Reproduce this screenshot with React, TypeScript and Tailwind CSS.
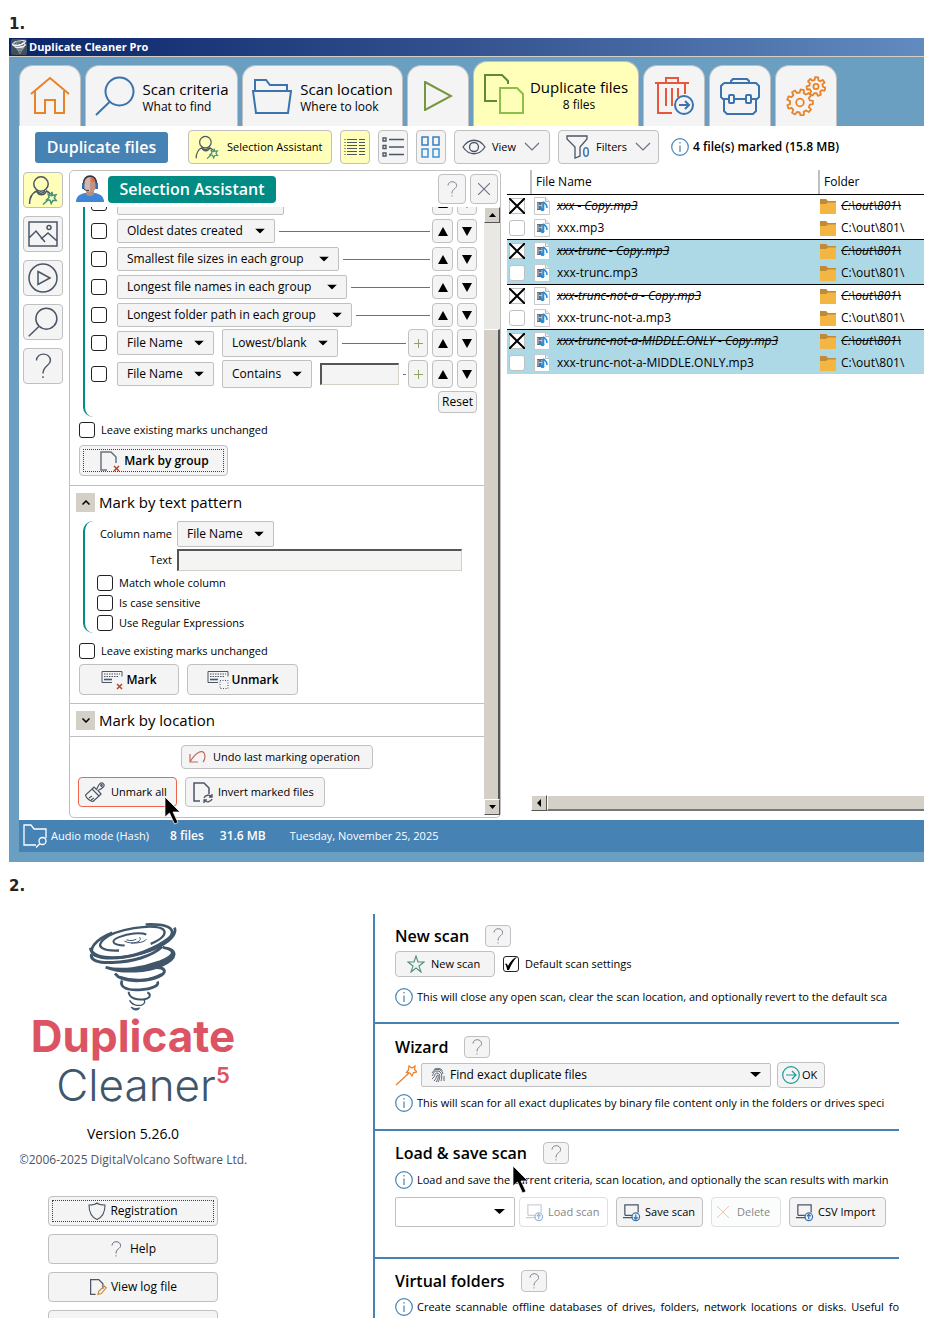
import type { ReactNode } from 'react';
import { clsx } from 'clsx';

interface IconProps {
  className?: string;
}

interface FileRow {
  name: string;
  folder: string;
  marked: boolean;
  shaded: boolean;
}

const files: FileRow[] = [
  { name: 'xxx - Copy.mp3', folder: 'C:\\out\\801\\', marked: true, shaded: false },
  { name: 'xxx.mp3', folder: 'C:\\out\\801\\', marked: false, shaded: false },
  { name: 'xxx-trunc - Copy.mp3', folder: 'C:\\out\\801\\', marked: true, shaded: true },
  { name: 'xxx-trunc.mp3', folder: 'C:\\out\\801\\', marked: false, shaded: true },
  { name: 'xxx-trunc-not-a - Copy.mp3', folder: 'C:\\out\\801\\', marked: true, shaded: false },
  { name: 'xxx-trunc-not-a.mp3', folder: 'C:\\out\\801\\', marked: false, shaded: false },
  { name: 'xxx-trunc-not-a-MIDDLE.ONLY - Copy.mp3', folder: 'C:\\out\\801\\', marked: true, shaded: true },
  { name: 'xxx-trunc-not-a-MIDDLE.ONLY.mp3', folder: 'C:\\out\\801\\', marked: false, shaded: true },
];

const groupRules = [
  { label: 'Oldest dates modified', width: 'w-[167px]' },
  { label: 'Oldest dates created', width: 'w-[158px]' },
  { label: 'Smallest file sizes in each group', width: 'w-[222px]' },
  { label: 'Longest file names in each group', width: 'w-[230px]' },
  { label: 'Longest folder path in each group', width: 'w-[235px]' },
];

/* ---------- icons ---------- */

function Svg({ className, box, children, width = 1.5 }: IconProps & { box: string; children: ReactNode; width?: number }) {
  return (
    <svg viewBox={box} className={clsx('shrink-0', className)} fill="none" stroke="currentColor" strokeWidth={width} aria-hidden="true">
      {children}
    </svg>
  );
}

// outline of a cog wheel with square teeth
function cog(cx: number, cy: number, outer: number, inner: number, teeth: number, turn = 0) {
  const step = (Math.PI * 2) / teeth;
  const points: string[] = [];
  for (let i = 0; i < teeth; i++) {
    const a = i * step + turn;
    [[-0.3, inner], [-0.19, outer], [0.19, outer], [0.3, inner]].forEach(([off, r]) => {
      const t = a + off * step;
      points.push(`${(cx + r * Math.cos(t)).toFixed(2)} ${(cy + r * Math.sin(t)).toFixed(2)}`);
    });
  }
  return `M${points.join('L')}Z`;
}

function Tornado({ className, bold = false }: IconProps & { bold?: boolean }) {
  return (
    <Svg box="0 0 264 266" className={className} width={bold ? 16 : 8}>
      <path d="M70 29C20 48-8 82 18 97c42 18 132 4 187-26C266 38 272 0 170 4" />
      <path d="M4 74c2 34 88 40 160 12 70-28 104-60 92-72 12 24-30 56-92 74C90 110 12 110 4 74z" fill="currentColor" />
      <path d="M90 82C40 84 18 70 45 48 80 18 190 0 222 18c16 16-12 34-37 44" strokeWidth={bold ? 12 : 7} />
      <path d="M107 67C70 66 62 52 90 42c28-11 64-16 82-8" strokeWidth="6" />
      <path d="M106 54c20 10 60 6 66-6M126 60c24-2 32-8 26-18M112 50c14 4 22 2 30-2" strokeWidth="3" />
      <path d="M8 93c-6 18 20 27 62 25C130 116 188 100 220 70" strokeWidth="9" />
      <path d="M222 73c40 8 36 24-8 42-54 20-118 30-164 17 50 20 126 14 170-6 46-20 48-48 2-53z" fill="currentColor" />
      <path d="M78 151c14 20 50 24 90 20 50-6 64-24 56-32-6-7-24-4-42-10" strokeWidth="9" />
      <path d="M99 172c-8 20 14 30 52 28 40-2 62-14 54-25" strokeWidth="8" />
      <path d="M92 160c40 14 90 12 124-8" strokeWidth="4" />
      <path d="M119 206c0 20 28 26 48 22 20-4 18-16 8-20" strokeWidth="6" />
      <path d="M122 231c4 12 22 18 36 15 12-4 10-14 6-18" strokeWidth="4" />
      <path d="M126 252c6 10 22 12 26 2-8 3-16 3-26-2z" fill="currentColor" strokeWidth="3" />
    </Svg>
  );
}

const Person = ({ className }: IconProps) => (
  <Svg box="0 0 30 30" className={className}>
    <circle cx="13" cy="9" r="7.2" />
    <path d="M1.500 29c0-7 3-11 7-13 2 5 8 5 10 0 2 1 3 2 4 3" />
    <path d="M9 16c2 3 6 3 8 0" />
    <path stroke="#4b9277" d="m24 17 .6 3.400 3.400-.6-1.800 3 2 2.700-3.400.1-1.600 3-1.200-3.300-3.400-.5 2.500-2.300-.9-3.200 3 1.400zM20 25l-5 4.500" />
  </Svg>
);

const Glass = ({ className }: IconProps) => (
  <Svg box="0 0 40 40" className={className} width={2}>
    <circle cx="24.500" cy="15.500" r="14" />
    <path d="M14.500 26 1 39" />
  </Svg>
);

const Page = ({ className, children }: IconProps & { children?: ReactNode }) => (
  <Svg box="0 0 22 22" className={className}>
    <path d="M8 20H2V2h10l5 5v6" />
    {children}
  </Svg>
);

const Question = ({ className }: IconProps) => (
  <Svg box="0 0 20 28" className={className}>
    <path d="M3 8c0-9 15-9 15 0 0 6-8 5-8 14M10 25v2" />
  </Svg>
);

const Info = ({ className = 'size-[18px]' }: IconProps) => (
  <Svg box="0 0 18 18" className={clsx('text-[#4682b4]', className)} width={1.2}>
    <circle cx="9" cy="9" r="8.300" />
    <path d="M9 7.500V14M9 4v1.500" />
  </Svg>
);

const Laptop = ({ up = false, className }: IconProps & { up?: boolean }) => (
  <Svg box="0 0 20 20" className={className} width={1.3}>
    <path d="M3 13V2h14v8M1 15.500h10M3 13h8" />
    <g stroke="#3a73ae">
      <circle cx="14.500" cy="14.500" r="4" />
      <path d={up ? 'M14.500 17v-5M12.500 14l2-2 2 2' : 'M14.500 12v5M12.500 15l2 2 2-2'} />
    </g>
  </Svg>
);

const Keyboard = ({ className, children }: IconProps & { children?: ReactNode }) => (
  <Svg box="0 0 22 20" className={className} width={1}>
    <path d="M11 12.500H1V1.500h20v5" />
    <path d="M3 4h16M3 6.500h15" strokeDasharray="1.500 1" />
    <path d="M3 9.500h8" strokeWidth="1.600" />
    {children}
  </Svg>
);

const Chevron = ({ className }: IconProps) => (
  <Svg box="0 0 16 10" className={className} width={1.2}>
    <path d="m1 1 7 7 7-7" />
  </Svg>
);

const Triangle = ({ className, up = false }: IconProps & { up?: boolean }) => (
  <svg viewBox="0 0 10 10" preserveAspectRatio="none" className={clsx('shrink-0 fill-black', className)} aria-hidden="true">
    <path d={up ? 'M5 0l5 10H0z' : 'M5 10L0 0h10z'} />
  </svg>
);

const Pointer = ({ className }: IconProps) => (
  <svg viewBox="0 0 17 29" className={clsx('pointer-events-none absolute z-10 h-[29px] w-[17px]', className)} aria-hidden="true">
    <path d="M1 1v20l4.500-4 5 11 3.500-1.500-5-10.500h7z" fill="#000" stroke="#fff" strokeWidth=".7" />
  </svg>
);

const Mp3 = () => (
  <svg viewBox="0 0 16 18" className="h-[18px] w-4 shrink-0" aria-hidden="true">
    <path d="M.5.500h11l4 4v13H.5z" fill="#fff" stroke="#c9c9c9" />
    <path d="M11.500.500v4h4" fill="#eee" stroke="#bbb" />
    <path d="M3 5h6v8H3z" fill="#5b6f86" />
    <path d="M4 6v6M8 6v6M5 8.500h3" stroke="#cfe0ee" strokeWidth=".8" />
    <path d="M9.500 4.500v7M9.500 5c1.500 2 4 2 3.500 6" fill="none" stroke="#1e90e6" strokeWidth="1.600" />
    <circle cx="8.500" cy="12.300" r="1.900" fill="#1e90e6" />
  </svg>
);

const Folder = () => (
  <svg viewBox="0 0 16 15" className="h-[15px] w-4 shrink-0" aria-hidden="true">
    <path d="M0 0h6l2 2h8v4H0z" fill="#c28a34" />
    <path d="M0 5h6l2-1.500h8V15H0z" fill="#f4b643" />
  </svg>
);

const Agent = () => (
  <svg viewBox="0 0 28 28" className="size-7 shrink-0" aria-hidden="true">
    <path d="M0 27c0-5 3-8 9-9h10c6 1 9 4 9 9z" fill="#3f86d8" />
    <path d="M10 14h8v5c-2 3-6 3-8 0z" fill="#b88e80" />
    <path d="M8 7c0-8 12-8 12 0v6c-2 5-10 5-12 0z" fill="#d8b5a8" />
    <path d="M14 1c4 0 6 2 6 6v6c-1 2-3 4-6 4z" fill="#c09585" />
    <path d="M7.500 9C7-1.500 21-1.500 20.500 9" fill="none" stroke="#34343c" strokeWidth="1.600" />
    <path d="M15 2c2 0 4 2 4 5h-3z" fill="#e8694a" />
    <path d="M6 8h2.500v6H6zM19.500 8H22v6h-2.500z" fill="#2f6fbd" />
    <path d="M7 13c1 2 3 2.500 6 2.500" fill="none" stroke="#34343c" />
  </svg>
);

/* ---------- controls ---------- */

const buttonBase = 'flex shrink-0 items-center rounded border border-[#c0c0c0] bg-[#f4f4f4] whitespace-nowrap';

function Check({ id, label, className, mark, border = 'border-[#222]' }: IconProps & { id: string; label?: string; mark?: 'tick' | 'cross'; border?: string }) {
  return (
    <span className={clsx('flex items-center gap-1.5', className)}>
      <span className="relative flex size-4 shrink-0">
        <input
          id={id}
          type="checkbox"
          defaultChecked={Boolean(mark)}
          aria-label={label ? undefined : id}
          className={clsx('size-4 appearance-none rounded-[3px] border bg-white', border)}
        />
        {mark === 'cross' && (
          <svg viewBox="0 0 16 16" className="pointer-events-none absolute inset-0 size-4" stroke="#000" strokeWidth="2" aria-hidden="true">
            <path d="m0 0 16 16M16 0 0 16" />
          </svg>
        )}
        {mark === 'tick' && (
          <svg viewBox="0 0 16 16" className="pointer-events-none absolute inset-0 size-4" aria-hidden="true">
            <path d="M2 8c1-1 2-1 3 2 2-4 5-8 9-9-3 3-6 8-8 13H4C4 12 3 9 2 8z" />
          </svg>
        )}
      </span>
      {label && <label htmlFor={id}>{label}</label>}
    </span>
  );
}

function Dropdown({ value, label, className, id }: { value: string; label: string; className: string; id?: string }) {
  return (
    <span className={clsx('relative flex shrink-0', className)}>
      <select
        id={id}
        aria-label={label}
        className="h-full w-full appearance-none rounded-[2px] border border-[#c0c0c0] bg-[#f4f4f4] pl-[9px] text-xs"
      >
        <option>{value}</option>
      </select>
      <Triangle className="pointer-events-none absolute top-1/2 right-[10px] h-[5px] w-[10px] -translate-y-1/2" />
    </span>
  );
}

function MoveButtons() {
  return (
    <>
      <button aria-label="Move up" className={clsx(buttonBase, 'h-full w-[21px] justify-center')}>
        <Triangle up className="h-[9px] w-[10px]" />
      </button>
      <button aria-label="Move down" className={clsx(buttonBase, 'ml-1 h-full w-5 justify-center')}>
        <Triangle className="h-[9px] w-[10px]" />
      </button>
    </>
  );
}

const AddButton = () => (
  <button aria-label="Add rule" className={clsx(buttonBase, 'mr-1 h-full w-5 justify-center text-[#8fa565]')}>
    <Svg box="0 0 9 9" className="size-[9px]" width={1}>
      <path d="M4.500 0v9M0 4.500h9" />
    </Svg>
  </button>
);

const HelpButton = ({ className = 'h-[22px] w-[26px]' }: IconProps) => (
  <button aria-label="Help" className={clsx(buttonBase, 'justify-center text-gray-500', className)}>
    <Question className="h-4 w-3" />
  </button>
);

function Tab({ className = 'w-[62px]', active = false, label, children }: IconProps & { active?: boolean; label: string; children: ReactNode }) {
  return (
    <button
      aria-label={label}
      className={clsx(
        'flex shrink-0 items-center justify-center gap-2 rounded-t-[14px] border border-b-0 border-[#c0c0c0]',
        active ? 'h-[65px] bg-[#ffffb9]' : 'h-[61px] bg-[#f4f4f4]',
        className,
      )}
    >
      {children}
    </button>
  );
}

function TabText({ title, sub, center = false }: { title: string; sub: string; center?: boolean }) {
  return (
    <span className={clsx('flex flex-col pt-[3px] whitespace-nowrap', center ? 'text-center' : 'text-left')}>
      <span className="text-[15px] leading-[18px]">{title}</span>
      <span className="text-xs leading-[18px]">{sub}</span>
    </span>
  );
}

/* ---------- main window ---------- */

function Tabs() {
  return (
    <nav className="flex items-end gap-1 overflow-hidden pt-1 pl-[10px]">
      <Tab label="Home">
        <Svg box="0 0 40 40" className="size-10 text-[#e8832a]" width={2}>
          <path d="M1 18 20 2l19 16M5 15v22h10V24h10v13h9V15" />
        </Svg>
      </Tab>
      <Tab label="Scan criteria" className="w-[153px]">
        <Glass className="size-10 text-[#3a73ae]" />
        <TabText title="Scan criteria" sub="What to find" />
      </Tab>
      <Tab label="Scan location" className="w-[161px]">
        <Svg box="0 0 40 38" className="h-[38px] w-10 text-[#3a73ae]" width={2}>
          <path d="M3 14V3h11l4 5h17v6M1 14h38l-3 22H4z" />
        </Svg>
        <TabText title="Scan location" sub="Where to look" />
      </Tab>
      <Tab label="Scan">
        <Svg box="0 0 30 30" className="size-[30px] text-[#76963f]" width={2}>
          <path d="m2 1 26 14L2 29z" />
        </Svg>
      </Tab>
      <Tab label="Duplicate files" active className="w-[166px] gap-1.5!">
        <Svg box="0 0 40 40" className="size-10 text-[#8dbd4d]" width={2}>
          <path d="M13 27H1V1h17l6 6v3" stroke="#5f8a34" />
          <path d="M16 14h17l6 6v19H16z" />
        </Svg>
        <TabText center title="Duplicate files" sub="8 files" />
      </Tab>
      <Tab label="File removal">
        <Svg box="0 0 40 40" className="size-10 text-[#e9563b]" width={2}>
          <path d="M1 7h34M12 7V2h12v5M4 8v29h14M31 8v10M12 12v18M18 12v18M24 12v9" />
          <g stroke="#3a73ae">
            <circle cx="30" cy="29" r="9" />
            <path d="M25 29h10M31 25l4 4-4 4" />
          </g>
        </Svg>
      </Tab>
      <Tab label="Tools">
        <Svg box="0 0 40 38" className="h-[38px] w-10 text-[#3a73ae]" width={2}>
          <path d="M11 6V4l2-2h14l2 2v2M4 6h32l3 3v11l-2 2h-6M9 22H3l-2-2V9l3-3M4 22v12l3 3h26l3-3V22M14 22h12" />
          <rect x="9" y="18" width="5" height="8" rx="1" />
          <rect x="26" y="18" width="5" height="8" rx="1" />
        </Svg>
      </Tab>
      <Tab label="Settings">
        <Svg box="0 0 40 40" className="size-10 text-[#e8832a]" width={1.8}>
          <path d={cog(14, 26.5, 13, 10, 9)} strokeLinejoin="round" />
          <circle cx="14" cy="26.500" r="3.800" />
          <path d={cog(30, 10.5, 9.500, 6.800, 7, 0.3)} strokeLinejoin="round" />
          <circle cx="30" cy="10.500" r="2.600" />
        </Svg>
      </Tab>
    </nav>
  );
}

function Toolbar() {
  const square = clsx(buttonBase, 'h-[34px] w-[30px] justify-center text-gray-600');
  return (
    <div className="flex items-center gap-2 overflow-hidden pt-1 pl-4 text-[11px] whitespace-nowrap">
      <h1 className="mr-3 flex h-[31px] w-[133px] shrink-0 items-center justify-center rounded-[3px] bg-[#4682b4] text-base font-semibold text-white">
        Duplicate files
      </h1>
      <button className={clsx(buttonBase, 'h-[34px] w-36 gap-2 bg-[#ffffb9]! pl-1.5')}>
        <Person className="size-6 text-gray-600" />
        Selection Assistant
      </button>
      <button aria-label="Details" className={clsx(square, 'bg-[#ffffb9]!')}>
        <Svg box="0 0 22 18" className="h-[18px] w-[22px]" width={1.2}>
          <path d="M3 1.500h10M3 4.500h10M3 7.500h10M3 10.500h10M3 13.500h10M3 16.500h10M15 1.500h6M15 4.500h6M15 7.500h6M15 10.500h6M15 13.500h6M15 16.500h6" />
          <path d="M1 1v16" strokeDasharray="1 2" />
        </Svg>
      </button>
      <button aria-label="List" className={square}>
        <Svg box="0 0 22 20" className="h-5 w-[22px]" width={1.3}>
          <path d="M1 1h3v3H1zM1 8.500h3v3H1zM1 16h3v3H1zM7 2.500h15M7 10h15M7 17.500h15" />
        </Svg>
      </button>
      <button aria-label="Tiles" className={square}>
        <Svg box="0 0 20 22" className="h-[22px] w-5 text-[#3a7cc0]">
          <path d="M1 1h6v8H1zM12 1h6v8h-6z" />
          <path d="M1 13h6v8H1zM12 13h6v8h-6z" stroke="#3d93d6" />
        </Svg>
      </button>
      <button className={clsx(buttonBase, 'h-[34px] w-24 gap-1.5 pl-[7px]')}>
        <Svg box="0 0 24 16" className="h-4 w-6 text-gray-600" width={1.3}>
          <path d="M1 8C7-1 17-1 23 8 17 17 7 17 1 8z" />
          <circle cx="12" cy="8" r="4.500" />
        </Svg>
        View
        <Chevron className="ml-[2px] h-2.5 w-4 text-gray-500" />
      </button>
      <button className={clsx(buttonBase, 'h-[34px] w-[101px] gap-1.5 pl-[7px]')}>
        <Svg box="0 0 24 24" className="size-6 text-gray-600" width={1.3}>
          <path d="M1 1h20v3l-7 8v9l-5 2V12L1 4z" />
          <ellipse cx="20" cy="17" rx="2.300" ry="4.200" stroke="#3a7cc0" strokeWidth="1.600" />
        </Svg>
        Filters
        <Chevron className="ml-[2px] h-2.5 w-4 text-gray-500" />
      </button>
      <p className="ml-1 flex items-center gap-1 text-xs font-semibold">
        <Info />
        4 file(s) marked (15.8 MB)
      </p>
    </div>
  );
}

function SideButtons() {
  const base = clsx(buttonBase, 'h-9 w-10 justify-center text-gray-600');
  return (
    <aside className="flex w-[50px] shrink-0 flex-col gap-2 pt-[2px] pl-1">
      <button aria-label="Selection Assistant" className={clsx(base, 'bg-[#ffffb9]!')}>
        <Person className="size-[30px]" />
      </button>
      <button aria-label="Image preview" className={base}>
        <Svg box="0 0 30 26" className="h-[26px] w-[30px]">
          <path d="M1 1h28v24H1zM1 17l7-7 9 11M13 18l7-6 9 8" />
          <circle cx="21" cy="6.500" r="2" />
        </Svg>
      </button>
      <button aria-label="Play" className={base}>
        <Svg box="0 0 30 30" className="size-[30px]">
          <circle cx="15" cy="15" r="14" />
          <path d="m10 8.500 12 6.500-12 6.500z" />
        </Svg>
      </button>
      <button aria-label="Search" className={base}>
        <Glass className="size-[30px]" />
      </button>
      <button aria-label="Help" className={base}>
        <Question className="h-[26px] w-5" />
      </button>
    </aside>
  );
}

function GroupRules() {
  return (
    <div className="mr-[7px] ml-[13px] overflow-hidden rounded-bl-[10px] border-l-2 border-[#008b84] pb-1 pl-1.5">
      <div className="-mt-4 flex flex-col gap-1">
        {groupRules.map((rule) => (
          <div key={rule.label} className="flex h-6 items-center">
            <Check id={`Use ${rule.label}`} className="mr-[10px]" />
            <Dropdown label={rule.label} value={rule.label} className={clsx('h-6', rule.width)} />
            <span className="mr-[2px] ml-1 h-px flex-1 bg-gray-500" />
            <MoveButtons />
          </div>
        ))}
      </div>
      <div className="mt-[2px] flex flex-col gap-[3px]">
        <div className="flex h-7 items-center">
          <Check id="Use file name order" className="mr-[10px]" />
          <Dropdown label="Column" value="File Name" className="mr-2 h-6 w-[97px]" />
          <Dropdown label="Order" value="Lowest/blank" className="h-7 w-[116px]" />
          <span className="mr-[2px] ml-1 h-px flex-1 bg-gray-500" />
          <AddButton />
          <MoveButtons />
        </div>
        <div className="flex h-7 items-center">
          <Check id="Use file name text" className="mr-[10px]" />
          <Dropdown label="Column" value="File Name" className="mr-2 h-6 w-[97px]" />
          <Dropdown label="Condition" value="Contains" className="mr-2 h-7 w-[90px]" />
          <input
            aria-label="Contains text"
            className="h-[22px] w-[79px] border border-t-2 border-l-2 border-[#d4d0c8] border-t-[#555] border-l-[#555] bg-[#f4f4f4]"
          />
          <span className="mr-[2px] ml-1 h-px flex-1 bg-gray-500" />
          <AddButton />
          <MoveButtons />
        </div>
        <button className={clsx(buttonBase, 'h-[22px] w-[39px] justify-center self-end text-xs')}>Reset</button>
      </div>
    </div>
  );
}

function SectionTitle({ title, open = false }: { title: string; open?: boolean }) {
  return (
    <div className="flex items-center gap-1 border-t border-[#c0c0c0] px-1.5">
      <button aria-label={title} className="flex size-[19px] items-center justify-center bg-[#d4d0c8]">
        <Svg box="0 0 8 5" className="h-[5px] w-2" width={1.5}>
          <path d={open ? 'm.5 4.500 3.500-3.500 3.500 3.500' : 'm.5.500 3.500 3.500 3.500-3.500'} />
        </Svg>
      </button>
      <h2 className="text-[15px] leading-8">{title}</h2>
    </div>
  );
}

function ScrollBar() {
  const end = 'flex size-4 shrink-0 items-center justify-center border border-t-white border-r-[#555] border-b-[#555] border-l-white bg-[#d4d0c8]';
  return (
    <div className="flex w-4 shrink-0 flex-col bg-[#e9e8e4]">
      <button aria-label="Scroll up" className={end}>
        <Triangle up className="h-1 w-[7px]" />
      </button>
      <div className="mt-[106px] flex-1 border-t border-r-2 border-t-white border-r-[#555] bg-[#d4d0c8]" />
      <button aria-label="Scroll down" className={end}>
        <Triangle className="h-1 w-[7px]" />
      </button>
    </div>
  );
}

function AssistantPanel() {
  return (
    <section className="flex w-[432px] shrink-0 flex-col rounded-[5px] border border-[#c0c0c0] pb-[2px]">
      <header className="flex h-9 items-center gap-1 pr-[2px] pl-1.5">
        <Agent />
        <h2 className="flex h-[27px] w-[168px] items-center justify-center rounded bg-[#008b84] text-base font-semibold text-white">
          Selection Assistant
        </h2>
        <HelpButton className="ml-auto h-[30px] w-7" />
        <button aria-label="Close" className={clsx(buttonBase, 'h-[30px] w-7 justify-center text-gray-500')}>
          <Svg box="0 0 12 12" className="size-3" width={1.1}>
            <path d="m0 0 12 12M12 0 0 12" />
          </Svg>
        </button>
      </header>
      <div className="flex text-[11px] leading-4">
        <div className="relative min-w-0 flex-1 pb-2">
          <GroupRules />
          <Check id="leave-group" label="Leave existing marks unchanged" className="mt-[5px] ml-[9px]" />
          <button className={clsx(buttonBase, 'mt-[7px] mb-[9px] ml-[9px] h-[31px] w-[149px] p-[3px] text-xs font-semibold')}>
            <span className="flex h-full w-full items-center justify-center gap-[2px] border border-dotted border-gray-700">
              <Page className="h-[22px] w-6 text-gray-500">
                <path d="m15 16 5 5M20 16l-5 5" stroke="#b5452f" />
              </Page>
              Mark by group
            </span>
          </button>
          <SectionTitle title="Mark by text pattern" open />
          <div className="mt-[3px] mr-[7px] ml-[13px] flex flex-col rounded-l-[10px] border-l-2 border-[#008b84]">
            <div className="flex items-center gap-[5px]">
              <label htmlFor="column" className="w-[87px] text-right">Column name</label>
              <Dropdown id="column" label="Column name" value="File Name" className="h-[26px] w-[97px]" />
            </div>
            <div className="mt-[2px] flex items-center gap-[5px]">
              <label htmlFor="pattern" className="w-[87px] text-right">Text</label>
              <input
                id="pattern"
                className="h-[22px] w-[285px] border border-t-2 border-l-2 border-[#d4d0c8] border-t-[#555] border-l-[#555] bg-[#f4f4f4]"
              />
            </div>
            <div className="mt-1 mb-[2px] flex flex-col gap-1 pl-3">
              <Check id="whole" label="Match whole column" />
              <Check id="case" label="Is case sensitive" />
              <Check id="regex" label="Use Regular Expressions" />
            </div>
          </div>
          <Check id="leave-text" label="Leave existing marks unchanged" className="mt-[10px] ml-[9px]" />
          <div className="mt-[5px] mb-2 ml-[9px] flex gap-2 text-xs font-semibold">
            <button className={clsx(buttonBase, 'h-[31px] w-[100px] justify-center gap-[3px]')}>
              <Keyboard className="h-5 w-[22px] text-gray-600">
                <path d="m16 14 5 5M21 14l-5 5" stroke="#b5452f" strokeWidth="1.500" />
              </Keyboard>
              Mark
            </button>
            <button className={clsx(buttonBase, 'h-[31px] w-[111px] justify-center gap-[3px]')}>
              <Keyboard className="h-5 w-[22px] text-gray-600">
                <path d="M13 10.500h8v8h-8z" strokeDasharray="1 1.500" />
              </Keyboard>
              Unmark
            </button>
          </div>
          <SectionTitle title="Mark by location" />
          <div className="border-t border-[#c0c0c0] pt-2 pl-2">
            <button className={clsx(buttonBase, 'ml-[103px] h-6 w-48 gap-1.5 pl-[7px]')}>
              <Svg box="0 0 18 12" className="h-3 w-[18px] text-[#c46a5c]" width={1.2}>
                <path d="M1 3v8h8M1 11c5-9 14-15 15-6 0 3-1 5-2 6" />
              </Svg>
              Undo last marking operation
            </button>
            <div className="mt-2 flex gap-2">
              <button className={clsx(buttonBase, 'h-[30px] w-[99px] gap-1.5 border-[#f0644b]! pl-1.5')}>
                <Svg box="0 0 20 20" className="size-5 text-gray-600" width={1.2}>
                  <path d="m7 7 7 7-6 5.500C5 19 1 16 .5 13zM7 7l2-2 2.500 2.500C13 5 14 0 17.500 1c3.500 2 1 5-4.500 7.500L16 12l-2 2M4 16l3-2M6 18l3-2" />
                  <circle cx="16.500" cy="3.500" r=".8" />
                </Svg>
                Unmark all
              </button>
              <button className={clsx(buttonBase, 'h-[30px] w-[140px] gap-1 pl-1.5')}>
                <Page className="size-[22px] text-gray-600">
                  <path d="M12 17c1-3 6-4 8-1M20 13v3h-3M20 18c-1 3-6 4-8 1M12 22v-3h3" strokeWidth="1.300" />
                </Page>
                Invert marked files
              </button>
            </div>
          </div>
          <Pointer className="bottom-[-10px] left-[94px]" />
        </div>
        <ScrollBar />
      </div>
    </section>
  );
}

function FileTable() {
  return (
    <div className="ml-1.5 flex min-w-0 flex-1 flex-col justify-between overflow-hidden pb-[7px]">
      <table className="w-full table-fixed border-separate border-spacing-0 text-xs leading-4">
        <thead>
          <tr className="h-6 text-left">
            <th className="w-[23px] p-0" aria-label="Marked" />
            <th className="w-[288px] border-l-2 border-[#c0c0c0] p-0 pl-1 font-normal">File Name</th>
            <th className="border-l-2 border-[#c0c0c0] p-0 pl-1 font-normal">Folder</th>
          </tr>
        </thead>
        <tbody>
          {files.map((file) => {
            const cell = clsx('p-0 whitespace-nowrap', file.marked && 'border-t border-black');
            const text = clsx(file.marked && 'italic line-through');
            return (
              <tr key={file.name} className={clsx(file.marked ? 'h-[23px]' : 'h-[22px]', file.shaded && 'bg-[#add8e6]')}>
                <td className={cell}>
                  <Check id={file.name} mark={file.marked ? 'cross' : undefined} border="border-[#c0c0c0]" className="pl-[2px]" />
                </td>
                <td className={cell}>
                  <span className="flex items-center gap-[7px] pl-1">
                    <Mp3 />
                    <span className={text}>{file.name}</span>
                  </span>
                </td>
                <td className={cell}>
                  <span className="flex items-center gap-[5px] pl-[2px]">
                    <Folder />
                    <span className={text}>{file.folder}</span>
                  </span>
                </td>
              </tr>
            );
          })}
        </tbody>
      </table>
      <div className="ml-6 flex h-4 bg-[#d4d0c8]">
        <button aria-label="Scroll left" className="flex size-4 items-center justify-center border border-r-[#555] border-b-[#555] border-white bg-[#d4d0c8]">
          <svg viewBox="0 0 4 8" className="h-2 w-1" aria-hidden="true">
            <path d="M4 0v8L0 4z" />
          </svg>
        </button>
        <div className="flex-1 border-t border-b-2 border-l border-white border-b-[#777]" />
      </div>
    </div>
  );
}

function MainWindow() {
  return (
    <div className="bg-[#6b9fc1] pb-[10px]">
      <div className="flex h-[19px] items-center gap-[2px] border-b border-[#d4d0c8] bg-linear-to-r from-[#0a246a] via-[#34528f] to-[#628bc0] pl-[2px] text-[11px] font-bold text-white">
        <span className="flex size-4 items-center justify-center rounded-[2px] bg-[#3f4f5c]">
          <Tornado bold className="size-3.5" />
        </span>
        Duplicate Cleaner Pro
      </div>
      <Tabs />
      <div className="ml-[10px] bg-white pb-[2px]">
        <Toolbar />
        <div className="mt-1 flex pt-[2px]">
          <SideButtons />
          <AssistantPanel />
          <FileTable />
        </div>
      </div>
      <footer className="ml-[10px] flex h-8 items-center bg-[#4682b4] pl-1 text-[11px] text-white">
        <Svg box="0 0 24 24" className="mr-1 size-6" width={1.3}>
          <path d="M13 21H1V1h7l3 4h12v9" />
          <circle cx="19.500" cy="17" r="3.500" />
          <path d="m17 19.500-4 4" />
        </Svg>
        <span className="w-[119px]">Audio mode (Hash)</span>
        <span className="text-xs font-semibold">8 files</span>
        <span className="ml-4 text-xs font-semibold">31.6 MB</span>
        <span className="ml-6">Tuesday, November 25, 2025</span>
      </footer>
    </div>
  );
}

/* ---------- home page ---------- */

function Brand() {
  const base = clsx(buttonBase, 'h-[30px] w-[170px] justify-center text-xs');
  return (
    <div className="flex w-[353px] shrink-0 flex-col pt-[9px]">
      <div className="flex w-[226px] flex-col items-center whitespace-nowrap">
        <Tornado className="h-[89px] w-[88px] text-[#3f566b]" />
        <p className="font-[Inter,sans-serif] text-[44px] leading-[49px] font-bold text-[#dc5463]">Duplicate</p>
        <p className="flex pl-5 font-[Inter,sans-serif] text-[44px] leading-[49px] font-light text-[#3f566b]">
          Cleaner
          <span className="text-[22px] leading-7 font-semibold text-[#dc5463]">5</span>
        </p>
        <p className="mt-[14px] text-sm leading-5">Version 5.26.0</p>
        <p className="mt-2 text-xs leading-4 font-medium text-gray-600">©2006-2025 DigitalVolcano Software Ltd.</p>
        <div className="mt-7 flex flex-col gap-2">
          <button className={clsx(base, 'p-[3px]')}>
            <span className="flex h-full w-full items-center justify-center gap-1 border border-dotted border-gray-700">
              <Svg box="0 0 18 18" className="size-[18px] text-gray-600" width={1.1}>
                <path d="M9 1c2 2 5 2 8 2 0 7-2 12-8 14.500C3 15 1 10 1 3c3 0 6 0 8-2z" />
              </Svg>
              Registration
            </span>
          </button>
          <button className={clsx(base, 'gap-2')}>
            <Question className="h-4 w-3 text-gray-600" />
            Help
          </button>
          <button className={clsx(base, 'gap-1')}>
            <Page className="size-[18px] text-gray-600">
              <path d="m11 20 1-4 7-6 2 2-6 7z" stroke="#cf8a3c" />
            </Page>
            View log file
          </button>
          <button aria-label="More" className={base} />
        </div>
      </div>
    </div>
  );
}

function Heading({ title }: { title: string }) {
  return (
    <div className="flex items-center gap-4">
      <h2 className="text-base leading-[22px] font-semibold">{title}</h2>
      <HelpButton />
    </div>
  );
}

function Note({ children, spread = false }: { children: ReactNode; spread?: boolean }) {
  return (
    <p className="flex items-center gap-1 overflow-hidden leading-[18px] whitespace-nowrap">
      <Info />
      <span className={clsx(spread && 'flex-1 [text-align-last:justify]')}>{children}</span>
    </p>
  );
}

function HomePage() {
  const action = clsx(buttonBase, 'h-[30px] gap-1 pl-[5px]');
  const block = 'border-b-2 border-[#4682b4] pl-5';
  return (
    <div className="ml-[11px] flex h-[404px] overflow-hidden">
      <Brand />
      <div className="relative mr-[25px] min-w-0 flex-1 border-l-2 border-[#4682b4] text-[11px] leading-4">
        <section className={clsx(block, 'pt-[11px] pb-4')}>
          <Heading title="New scan" />
          <div className="mt-1 mb-[11px] flex items-center gap-2">
            <button className={clsx(buttonBase, 'h-[26px] w-[100px] gap-1.5 pl-[11px]')}>
              <Svg box="0 0 18 18" className="size-[18px] text-[#4b9277]" width={1.1}>
                <path d="m9 1 2 6h6l-5 4 2 6-5-4-5 4 2-6-5-4h6z" />
              </Svg>
              New scan
            </button>
            <Check id="defaults" label="Default scan settings" mark="tick" />
          </div>
          <Note>This will close any open scan, clear the scan location, and optionally revert to the default sca</Note>
        </section>
        <section className={clsx(block, 'pt-3 pb-[17px]')}>
          <Heading title="Wizard" />
          <div className="mt-1 mb-1.5 flex items-center">
            <Svg box="0 0 22 22" className="mr-1 size-[22px] text-[#e8832a]" width={1.3}>
              <path d="m1 21 13-12M14 2l3 2 3-2-.5 3.500L22 8l-3.500.500L17 12l-2-3-3.500-.500 2-2.500z" />
            </Svg>
            <span className="relative flex h-6 w-[350px]">
              <select aria-label="Wizard" className="w-full appearance-none rounded-[2px] border border-[#c0c0c0] bg-[#f4f4f4] pl-7 text-xs">
                <option>Find exact duplicate files</option>
              </select>
              <Svg box="0 0 14 16" className="pointer-events-none absolute top-1 left-[10px] h-4 w-3.5 text-gray-600" width={0.9}>
                <path d="M3 2.500c3-2 7-1 8.500 1M1 6c2-5 10-5 11 1M1 9c2-2 1-5 5-5 6 0 5 7 4 10M1 12c4-3 2-6 5-6 4 0 3 6 1 9M3 14c3-3 2-6 4-6 1 3-1 6-2 7M13 9v5" />
              </Svg>
              <Triangle className="pointer-events-none absolute top-[9px] right-[10px] h-[5px] w-[11px]" />
            </span>
            <button className={clsx(buttonBase, 'ml-1.5 h-[26px] w-12 gap-[2px] pl-1')}>
              <Svg box="0 0 18 18" className="size-[18px] text-[#1c9a94]" width={1.2}>
                <circle cx="9" cy="9" r="8.300" />
                <path d="M4 9h10M10 5l4 4-4 4" />
              </Svg>
              OK
            </button>
          </div>
          <Note>This will scan for all exact duplicates by binary file content only in the folders or drives speci</Note>
        </section>
        <section className={clsx(block, 'pt-[11px] pb-[30px]')}>
          <Heading title="Load & save scan" />
          <div className="mt-[7px] mb-2">
            <Note>Load and save the current criteria, scan location, and optionally the scan results with markin</Note>
          </div>
          <div className="flex items-center">
            <span className="relative mr-1 flex h-[30px] w-[120px]">
              <select aria-label="Saved scan" className="w-full appearance-none rounded-[2px] border border-[#c0c0c0] bg-white" />
              <Triangle className="pointer-events-none absolute top-3 right-[10px] h-[5px] w-[11px]" />
            </span>
            <button disabled className={clsx(action, 'mr-2 w-[89px] bg-white! opacity-50')}>
              <Laptop up className="size-[19px] text-gray-400" />
              Load scan
            </button>
            <button className={clsx(action, 'mr-2 w-[87px]')}>
              <Laptop className="size-[19px] text-gray-600" />
              Save scan
            </button>
            <button disabled className={clsx(action, 'mr-2 w-[70px] gap-2 bg-[#f8fcfc]! opacity-50')}>
              <Svg box="0 0 12 12" className="size-3 text-[#e08a80]" width={1}>
                <path d="m0 0 12 12M12 0 0 12" />
              </Svg>
              Delete
            </button>
            <button className={clsx(action, 'w-[97px]')}>
              <Laptop up className="size-[19px] text-gray-600" />
              CSV Import
            </button>
          </div>
        </section>
        <section className="pt-[11px] pl-5">
          <Heading title="Virtual folders" />
          <div className="mt-1.5">
            <Note spread>Create scannable offline databases of drives, folders, network locations or disks. Useful fo</Note>
          </div>
        </section>
        <Pointer className="top-[251px] left-[137px]" />
      </div>
    </div>
  );
}

export default function App() {
  return (
    <main className="bg-white px-[9px] pb-[9px] font-['Open_Sans','Noto_Sans',sans-serif] text-black">
      <p className="pt-4 pb-1.5 font-['DejaVu_Sans',sans-serif] text-[15px] leading-4 font-bold text-[#222]">1.</p>
      <MainWindow />
      <p className="pt-4 pb-5 font-['DejaVu_Sans',sans-serif] text-[15px] leading-4 font-bold text-[#222]">2.</p>
      <HomePage />
    </main>
  );
}
